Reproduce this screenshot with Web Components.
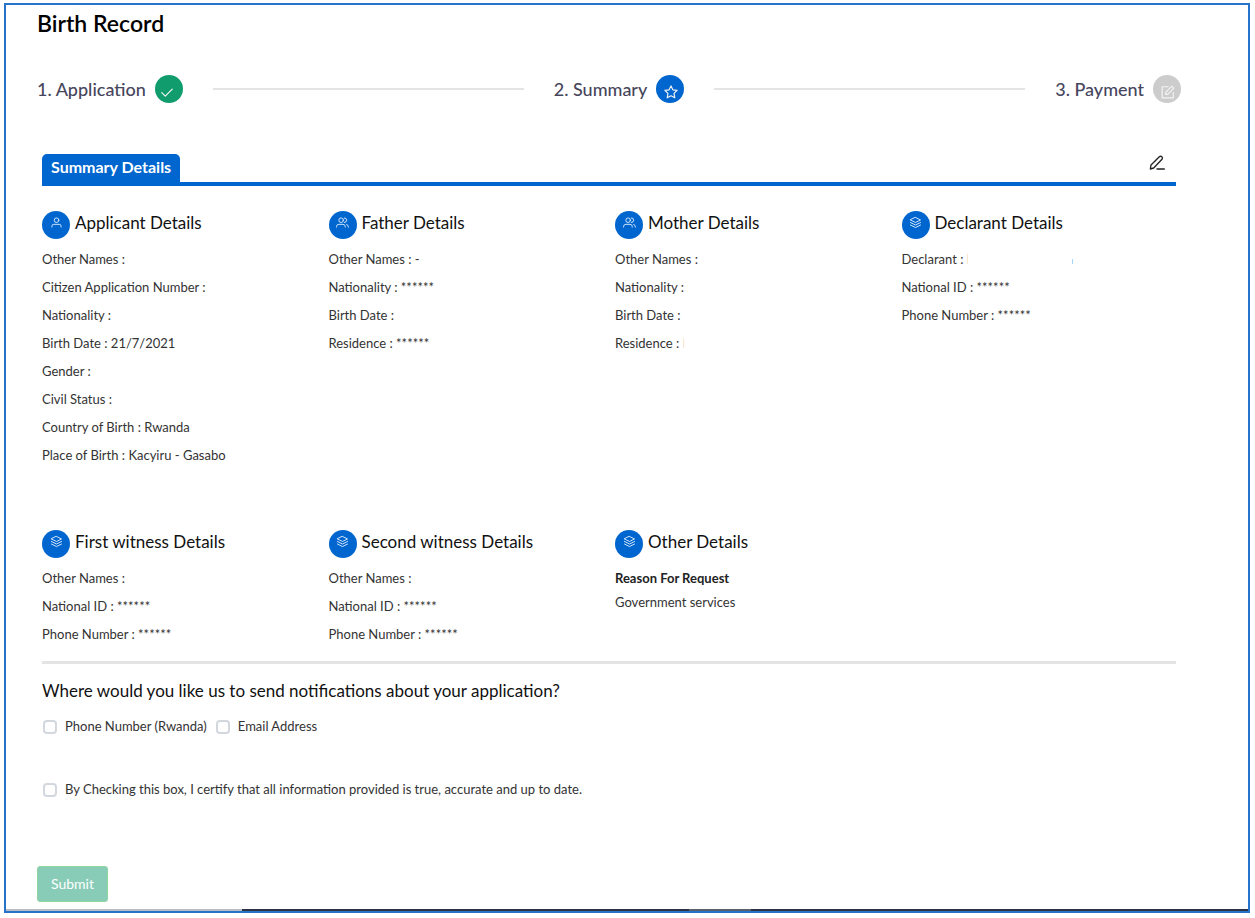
<!DOCTYPE html>
<html lang="en">
<head>
<meta charset="utf-8">
<meta name="viewport" content="width=device-width, initial-scale=1">
<title>Birth Record</title>
<style>
body {
	margin: 3px 5px 3px 4px;
	background: #fff;
	color: #111;
	font-family: Lato, "Open Sans", sans-serif;
	--blue: #0066cf;
	--line: #e4e4e4;
}
</style>
</head>
<body>
<birth-record></birth-record>

<script>
const icons = {
	check: '<path d="M3 13l6 6L21 7"/>',
	star: '<path d="M12 1.500l3.200 6.800 7.300 1-5.300 5.200 1.300 7.500L12 18.500 5.500 22l1.300-7.500L1.500 9.300l7.300-1z"/>',
	form: '<path d="M12 3H2v19h19v-9"/><path d="M8 12.500L18.500 2l3.500 3.500L11.500 16H8z"/>',
	pen: '<path d="M2 21l1-6L15.500 2.500q2-1.500 3.800.2t.2 3.800L7 19.500z"/><path d="M12 21h11"/>',
	user: '<circle cx="12" cy="7" r="5"/><path d="M2 22v-2q0-4 4-4h12q4 0 4 4v2"/>',
	users: '<circle cx="9" cy="7" r="5"/><path d="M-1 22v-1q0-5 5-5h9q5 0 5 5v1M16 2q5 0 5 5t-5 5M21 16q4 1 4 6"/>',
	layers: '<path d="M12 1l11 5.500L12 12 1 6.500zM1 12l11 5.500L23 12M1 17.500L12 23l11-5.500"/>'
};

function icon(name, size, width) {
	return `<svg width="${size}" height="${size}" viewBox="0 0 24 24" fill="none" stroke="currentColor" stroke-width="${width}" stroke-linejoin="round" stroke-linecap="round" overflow="visible" aria-hidden="true">${icons[name]}</svg>`;
}

/**
 * One step of the progress bar: label and round state icon
 */
class ProgressStep extends HTMLElement {
	connectedCallback() {
		const shadow = this.attachShadow({ mode: 'open' });
		shadow.innerHTML = `
<style>
:host {
	display: flex;
	align-items: center;
	gap: 9px;
	color: #46465c;
	font-size: 18px;
	line-height: 28px;
	font-weight: 500;
	white-space: nowrap;
}
.dot {
	display: flex;
	justify-content: center;
	box-sizing: border-box;
	width: 28px;
	height: 28px;
	padding: 10px 0 0 1px;
	border-radius: 50%;
	background: #ccc;
	color: #f4f4f4;
}
:host([state="done"]) .dot {
	padding: 10px 3px 0 0;
	background: #119c6d;
}
:host([state="current"]) .dot { background: var(--blue); }
</style>
<slot></slot>
<span class="dot">${icon(this.getAttribute('icon'), 14, 2)}</span>`;
	}
}

/**
 * Group of details with an icon heading, rows are slotted
 */
class DetailGroup extends HTMLElement {
	connectedCallback() {
		const shadow = this.attachShadow({ mode: 'open' });
		shadow.innerHTML = `
<style>
:host { display: block; }
header {
	display: flex;
	gap: 5px;
	margin-bottom: 6px;
}
.dot {
	display: flex;
	justify-content: center;
	box-sizing: border-box;
	width: 28px;
	height: 28px;
	padding-top: 6px;
	border-radius: 50%;
	background: var(--blue);
	color: #e4efff;
}
h2 {
	margin: 0;
	font-size: 17px;
	line-height: 24px;
	font-weight: 400;
}
</style>
<header>
	<span class="dot">${icon(this.getAttribute('icon'), 11, 2)}</span>
	<h2>${this.getAttribute('heading')}</h2>
</header>
<slot></slot>`;
	}
}

class DetailRow extends HTMLElement {
	connectedCallback() {
		const shadow = this.attachShadow({ mode: 'open' });
		shadow.innerHTML = `
<style>
:host {
	display: block;
	color: #333;
	font-size: 13px;
	line-height: 28px;
}
</style>
<slot></slot>`;
	}
}

class CheckOption extends HTMLElement {
	connectedCallback() {
		const shadow = this.attachShadow({ mode: 'open' });
		shadow.innerHTML = `
<style>
:host { display: block; }
label {
	display: flex;
	align-items: center;
	gap: 8px;
	color: #333;
	font-size: 13px;
	line-height: 20px;
}
input {
	appearance: none;
	box-sizing: border-box;
	width: 14px;
	height: 14px;
	margin: 2px 0 0 1px;
	border: 2px solid #d3d8df;
	border-radius: 4px;
	background: #fff;
}
input:checked { background: var(--blue); }
</style>
<label><input type="checkbox"><slot></slot></label>`;
	}
}

class BirthRecord extends HTMLElement {
	connectedCallback() {
		const shadow = this.attachShadow({ mode: 'open' });
		shadow.innerHTML = `
<style>
:host {
	display: block;
	border: 2px solid #2673cc;
	padding: 6px 67px 0 31px;
}
h1 {
	margin: 0;
	color: #000;
	font-size: 23px;
	line-height: 24px;
	font-weight: 600;
}
.steps {
	display: flex;
	align-items: center;
	gap: 30px;
	margin: 40px 0 51px;
}
.steps i {
	flex: 1;
	height: 2px;
	background: var(--line);
}
main { padding: 0 5px; }
.tabs {
	display: flex;
	justify-content: space-between;
	border-bottom: 4px solid var(--blue);
}
.tabs h2 {
	margin: 0;
	padding: 0 9px 2px;
	border-radius: 5px 5px 0 0;
	background: var(--blue);
	color: #fff;
	font-size: 16px;
	line-height: 26px;
	font-weight: 700;
}
.tabs button {
	padding: 0;
	margin: 0 11px 11px 0;
	border: 0;
	background: none;
	color: #222;
	line-height: 0;
}
.groups {
	display: grid;
	grid-template-columns: repeat(4, 1fr);
	gap: 61px 12px;
	margin-top: 25px;
	padding-bottom: 13px;
	border-bottom: 3px solid var(--line);
}
.groups h3, .groups p {
	margin: 0;
	color: #333;
	font-size: 13px;
	line-height: 24px;
	font-weight: 400;
}
.groups h3 {
	padding-top: 2px;
	color: #222;
	font-weight: 700;
}
/* edge of a value that is hidden */
.edge {
	display: inline-block;
	width: 1px;
	height: 10px;
	background: #fbe6d0;
}
.edge.end {
	height: 5px;
	margin-left: 104px;
	background: #a9d4fa;
}
fieldset {
	margin: 0;
	padding: 0;
	border: 0;
}
legend {
	padding: 15px 0 13px;
	font-size: 17px;
	line-height: 24px;
}
.options {
	display: flex;
	gap: 8px;
	margin-bottom: 43px;
}
.submit {
	display: block;
	margin: 67px 0 7px;
	padding: 0 13px;
	border: 1px solid #8fd6a1;
	border-radius: 3px;
	background: #88ccb8;
	color: #fff;
	font: 14px/34px Lato, "Open Sans", sans-serif;
}
.taskbar {
	height: 2px;
	margin: 0 -67px 0 -31px;
	background: linear-gradient(to right, #b9bcc0 19%, #2b3440 19%, #2b3440 55%, #59616b 55%, #59616b 60%, #2b3440 60%);
}
</style>
<h1>Birth Record</h1>
<div class="steps">
	<progress-step state="done" icon="check">1. Application</progress-step>
	<i></i>
	<progress-step state="current" icon="star">2. Summary</progress-step>
	<i></i>
	<progress-step icon="form">3. Payment</progress-step>
</div>
<main>
	<div class="tabs">
		<h2>Summary Details</h2>
		<button type="button" aria-label="Edit">${icon('pen', 16, 2)}</button>
	</div>
	<div class="groups">
		<detail-group icon="user" heading="Applicant Details">
			<detail-row>Other Names :</detail-row>
			<detail-row>Citizen Application Number :</detail-row>
			<detail-row>Nationality :</detail-row>
			<detail-row>Birth Date : 21/7/2021</detail-row>
			<detail-row>Gender :</detail-row>
			<detail-row>Civil Status :</detail-row>
			<detail-row>Country of Birth : Rwanda</detail-row>
			<detail-row>Place of Birth : Kacyiru - Gasabo</detail-row>
		</detail-group>
		<detail-group icon="users" heading="Father Details">
			<detail-row>Other Names : -</detail-row>
			<detail-row>Nationality : ******</detail-row>
			<detail-row>Birth Date :</detail-row>
			<detail-row>Residence : ******</detail-row>
		</detail-group>
		<detail-group icon="users" heading="Mother Details">
			<detail-row>Other Names :</detail-row>
			<detail-row>Nationality :</detail-row>
			<detail-row>Birth Date :</detail-row>
			<detail-row>Residence : <span class="edge"></span></detail-row>
		</detail-group>
		<detail-group icon="layers" heading="Declarant Details">
			<detail-row>Declarant : <span class="edge"></span><span class="edge end"></span></detail-row>
			<detail-row>National ID : ******</detail-row>
			<detail-row>Phone Number : ******</detail-row>
		</detail-group>
		<detail-group icon="layers" heading="First witness Details">
			<detail-row>Other Names :</detail-row>
			<detail-row>National ID : ******</detail-row>
			<detail-row>Phone Number : ******</detail-row>
		</detail-group>
		<detail-group icon="layers" heading="Second witness Details">
			<detail-row>Other Names :</detail-row>
			<detail-row>National ID : ******</detail-row>
			<detail-row>Phone Number : ******</detail-row>
		</detail-group>
		<detail-group icon="layers" heading="Other Details">
			<h3>Reason For Request</h3>
			<p>Government services</p>
		</detail-group>
	</div>
	<fieldset>
		<legend>Where would you like us to send notifications about your application?</legend>
		<div class="options">
			<check-option>Phone Number (Rwanda)</check-option>
			<check-option>Email Address</check-option>
		</div>
	</fieldset>
	<check-option>By Checking this box, I certify that all information provided is true, accurate and up to date.</check-option>
</main>
<button class="submit" type="submit">Submit</button>
<div class="taskbar"></div>`;
	}
}

window.customElements.define('progress-step', ProgressStep);
window.customElements.define('detail-group', DetailGroup);
window.customElements.define('detail-row', DetailRow);
window.customElements.define('check-option', CheckOption);
window.customElements.define('birth-record', BirthRecord);
</script>
</body>
</html>
